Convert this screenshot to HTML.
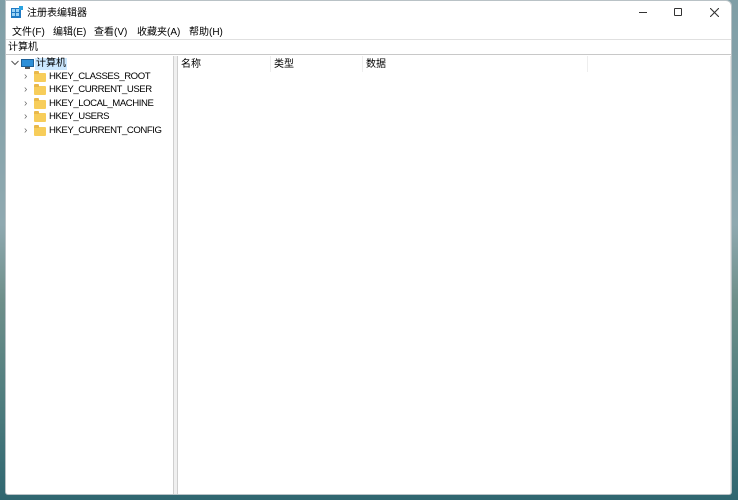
<!DOCTYPE html>
<html><head><meta charset="utf-8"><style>
*{margin:0;padding:0;box-sizing:border-box}
body{width:738px;height:500px;overflow:hidden;position:relative;font-family:"Liberation Sans","Noto Sans CJK SC",sans-serif;font-size:10px;color:#000;
background:linear-gradient(180deg,#7f9ea6 0%,#8fa9b0 45%,#6e8f8a 60%,#4f7d7e 80%,#2f6670 100%)}
.win{position:absolute;left:5px;top:0;width:727px;height:495px;background:#fff;border:1px solid #b9c2c6;border-radius:0 6px 3px 3px;overflow:hidden}
.t{position:absolute;white-space:nowrap;line-height:12px}
.h{font-size:9.6px;letter-spacing:-0.45px}
.tree{position:absolute;left:2px;top:55px;width:166px;height:438px;background:#fff}
.split{position:absolute;left:167px;top:55px;width:5px;height:440px;background:#f0f0f0;border-left:1px solid #cfcfcf;border-right:1px solid #cfcfcf}
.hdr{position:absolute;top:55px;height:16px;border-right:1px solid #eee}
.folder{position:absolute;width:12px;height:9px;background:#f7cd5a;border-radius:1px}
.folder:before{content:"";position:absolute;left:0;top:-2px;width:5px;height:3px;background:#e9b84a;border-radius:1px 1px 0 0}
.chev{position:absolute;font-size:10px;color:#666;line-height:12px}
</style></head><body>
<div class="win">
 <svg style="position:absolute;left:5px;top:5px" width="12" height="12"><rect x="0" y="2" width="10" height="10" fill="#1f7ac4"/><rect x="1" y="3" width="3" height="3" fill="#9cd3f5"/><rect x="5" y="3" width="3" height="3" fill="#9cd3f5"/><rect x="1" y="7" width="3" height="3" fill="#9cd3f5"/><rect x="5" y="7" width="3" height="3" fill="#9cd3f5"/><rect x="8" y="0" width="4" height="4" fill="#2aa3e0"/></svg>
 <div class="t" style="left:21px;top:7px">注册表编辑器</div>
 <div style="position:absolute;left:633px;top:11px;width:8px;height:1px;background:#333"></div>
 <div style="position:absolute;left:668px;top:7px;width:8px;height:8px;border:1px solid #333;border-radius:1px"></div>
 <svg style="position:absolute;left:704px;top:7px" width="9" height="9"><path d="M0 0L9 9M9 0L0 9" stroke="#333" stroke-width="1.1"/></svg>
 <div class="t" style="left:6px;top:26px">文件(F)</div>
 <div class="t" style="left:47px;top:26px">编辑(E)</div>
 <div class="t" style="left:88px;top:26px">查看(V)</div>
 <div class="t" style="left:131px;top:26px">收藏夹(A)</div>
 <div class="t" style="left:183px;top:26px">帮助(H)</div>
 <div style="position:absolute;left:0;top:38px;width:727px;height:1px;background:#e0e0e0"></div>
 <div class="t" style="left:2px;top:41px">计算机</div>
 <div style="position:absolute;left:0;top:53px;width:727px;height:1px;background:#c8c8c8"></div>
 <div class="tree">
  <svg style="position:absolute;left:3px;top:4px" width="8" height="6"><path d="M0.5 1L4 4.5L7.5 1" stroke="#555" fill="none"/></svg>
  <div style="position:absolute;left:13px;top:3px;width:13px;height:8px;background:#2d8fd8;border:1px solid #1d5f96"></div>
  <div style="position:absolute;left:17px;top:11px;width:5px;height:2px;background:#555"></div>
  <div class="t" style="left:27px;top:2px;background:#cce8ff;padding:0 1px">计算机</div>
  <div class="chev" style="left:16px;top:15px">›</div><div class="folder" style="left:26px;top:17px"></div><div class="t h" style="left:41px;top:15px">HKEY_CLASSES_ROOT</div>
  <div class="chev" style="left:16px;top:28px">›</div><div class="folder" style="left:26px;top:30px"></div><div class="t h" style="left:41px;top:28px">HKEY_CURRENT_USER</div>
  <div class="chev" style="left:16px;top:42px">›</div><div class="folder" style="left:26px;top:44px"></div><div class="t h" style="left:41px;top:42px">HKEY_LOCAL_MACHINE</div>
  <div class="chev" style="left:16px;top:55px">›</div><div class="folder" style="left:26px;top:57px"></div><div class="t h" style="left:41px;top:55px">HKEY_USERS</div>
  <div class="chev" style="left:16px;top:69px">›</div><div class="folder" style="left:26px;top:71px"></div><div class="t h" style="left:41px;top:69px">HKEY_CURRENT_CONFIG</div>
 </div>
 <div class="split"></div>
 <div class="hdr" style="left:172px;width:93px"></div>
 <div class="hdr" style="left:265px;width:92px"></div>
 <div class="hdr" style="left:357px;width:225px"></div>
 <div class="t" style="left:175px;top:58px">名称</div>
 <div class="t" style="left:268px;top:58px">类型</div>
 <div class="t" style="left:360px;top:58px">数据</div>
 <div style="position:absolute;left:724px;top:55px;width:1px;height:440px;background:#e6e6e6"></div>
</div>
</body></html>
